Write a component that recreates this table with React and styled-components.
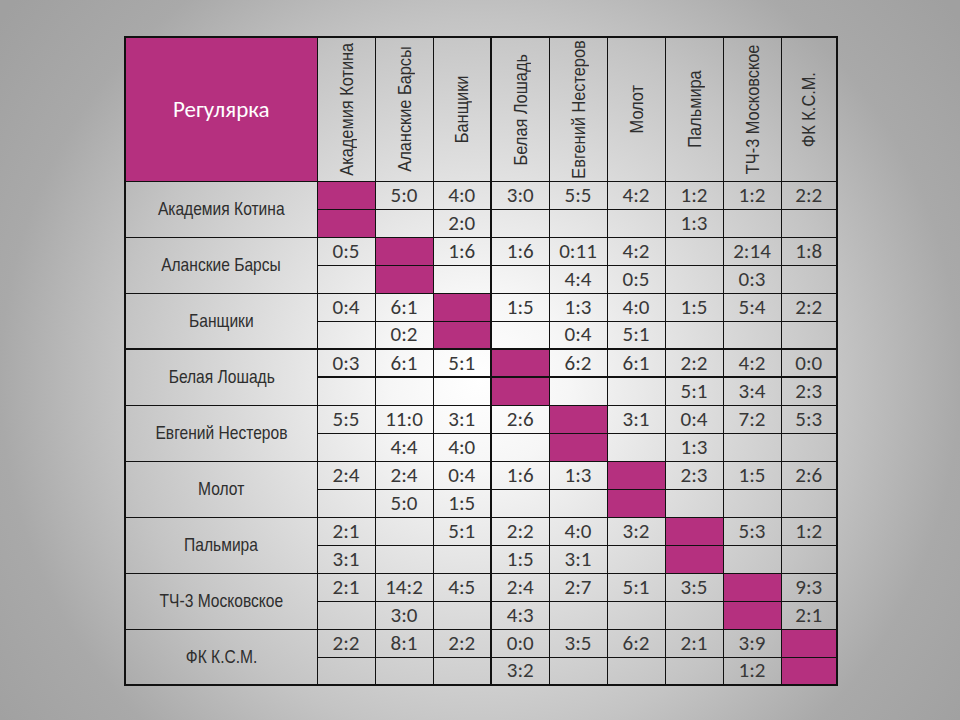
import React from "react";
import styled, { createGlobalStyle, css } from "styled-components";

const Global = createGlobalStyle`
  html, body { margin: 0; padding: 0; }
  body { width: 960px; height: 720px; overflow: hidden; }
  #root { width: 960px; height: 720px; }
`;

const Slide = styled.div`
  width: 960px;
  height: 720px;
  box-sizing: border-box;
  padding: 36px 0 0 124px;
  background: radial-gradient(circle at 480px 380px, #ffffff 0px, #f6f6f6 90px, #c4c4c4 360px, #a9a9a9 480px, #a0a0a0 600px);
`;

const Table = styled.table`
  border-collapse: collapse;
  table-layout: fixed;
  width: 712px;
  border: 2px solid #111;
`;

const nameFont = css`
  font-family: "Liberation Sans", Arial, sans-serif;
  font-size: 19px;
  color: #2e2e2e;
  font-weight: normal;
`;

const Corner = styled.th`
  background: #b5307f;
  color: #fff;
  font-family: Carlito, Lato, "Noto Sans", sans-serif;
  font-size: 23px;
  font-weight: normal;
  border: 1px solid #111;
  padding: 0;
`;

const HeadRow = styled.tr`
  height: 144px;
`;

const SubRow = styled.tr`
  height: 28px;
`;

const ColHead = styled.th`
  ${nameFont}
  padding: 0;
  border: 1px solid #111;
  ${(p) => p.$thickLeft && css`border-left: 2px solid #111;`}
`;

const HeadBox = styled.div`
  height: 142px;
  display: flex;
  align-items: center;
  justify-content: center;
  overflow: visible;
`;

const Vertical = styled.span`
  display: inline-block;
  flex: none;
  writing-mode: vertical-rl;
  transform: rotate(180deg) scaleY(0.86);
  white-space: nowrap;
  line-height: 1;
`;

const RowHead = styled.th`
  ${nameFont}
  padding: 0;
  border: 1px solid #111;
  ${(p) => p.$thickTop && css`border-top: 2px solid #111;`}
  text-align: center;
  vertical-align: middle;
  white-space: nowrap;
`;

const Narrow = styled.span`
  display: inline-block;
  transform: scaleX(0.82);
`;

const Score = styled.td`
  font-family: Carlito, Lato, "Noto Sans", sans-serif;
  font-size: 21px;
  color: #383838;
  text-align: center;
  vertical-align: middle;
  padding: 0;
  line-height: 1;
  border: 1px solid #111;
  ${(p) => p.$thickLeft && css`border-left: 2px solid #111;`}
  ${(p) => p.$thickTop && css`border-top: 2px solid #111;`}
  ${(p) => p.$mag && css`background: #b5307f;`}
`;

const teams = [
  "Академия Котина",
  "Аланские Барсы",
  "Банщики",
  "Белая Лошадь",
  "Евгений Нестеров",
  "Молот",
  "Пальмира",
  "ТЧ-3 Московское",
  "ФК К.С.М.",
];

const M = "M";
const data = [
  [[M, "5:0", "4:0", "3:0", "5:5", "4:2", "1:2", "1:2", "2:2"], [M, "", "2:0", "", "", "", "1:3", "", ""]],
  [["0:5", M, "1:6", "1:6", "0:11", "4:2", "", "2:14", "1:8"], ["", M, "", "", "4:4", "0:5", "", "0:3", ""]],
  [["0:4", "6:1", M, "1:5", "1:3", "4:0", "1:5", "5:4", "2:2"], ["", "0:2", M, "", "0:4", "5:1", "", "", ""]],
  [["0:3", "6:1", "5:1", M, "6:2", "6:1", "2:2", "4:2", "0:0"], ["", "", "", M, "", "", "5:1", "3:4", "2:3"]],
  [["5:5", "11:0", "3:1", "2:6", M, "3:1", "0:4", "7:2", "5:3"], ["", "4:4", "4:0", "", M, "", "1:3", "", ""]],
  [["2:4", "2:4", "0:4", "1:6", "1:3", M, "2:3", "1:5", "2:6"], ["", "5:0", "1:5", "", "", M, "", "", ""]],
  [["2:1", "", "5:1", "2:2", "4:0", "3:2", M, "5:3", "1:2"], ["3:1", "", "", "1:5", "3:1", "", M, "", ""]],
  [["2:1", "14:2", "4:5", "2:4", "2:7", "5:1", "3:5", M, "9:3"], ["", "3:0", "", "4:3", "", "", "", M, "2:1"]],
  [["2:2", "8:1", "2:2", "0:0", "3:5", "6:2", "2:1", "3:9", M], ["", "", "", "3:2", "", "", "", "1:2", M]],
];

const widths = [192, 58, 58, 58, 58, 58, 58, 58, 58, 56];

export default function App() {
  return (
    <>
      <Global />
      <Slide>
        <Table>
          <colgroup>
            {widths.map((w, i) => (
              <col key={i} style={{ width: w }} />
            ))}
          </colgroup>
          <thead>
            <HeadRow>
              <Corner>Регулярка</Corner>
              {teams.map((t, i) => (
                <ColHead key={t} $thickLeft={i === 3}>
                  <HeadBox>
                    <Vertical>{t}</Vertical>
                  </HeadBox>
                </ColHead>
              ))}
            </HeadRow>
          </thead>
          <tbody>
            {data.map((rows, r) =>
              rows.map((cells, s) => (
                <SubRow key={`${r}-${s}`}>
                  {s === 0 && (
                    <RowHead rowSpan={2} $thickTop={r === 3}>
                      <Narrow>{teams[r]}</Narrow>
                    </RowHead>
                  )}
                  {cells.map((c, i) => (
                    <Score
                      key={i}
                      $mag={c === M}
                      $thickLeft={i === 3}
                      $thickTop={r === 3}
                    >
                      {c === M ? "" : c}
                    </Score>
                  ))}
                </SubRow>
              ))
            )}
          </tbody>
        </Table>
      </Slide>
    </>
  );
}
